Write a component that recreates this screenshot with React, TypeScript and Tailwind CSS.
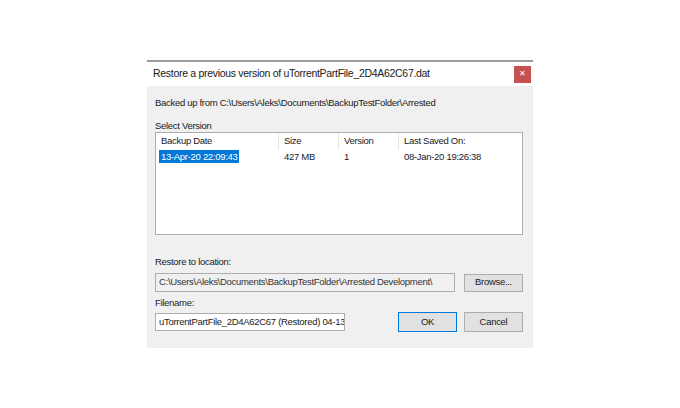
const font = { fontFamily: '"Liberation Sans", Arial, sans-serif' };

const cols = [
  { label: 'Backup Date', w: 'w-[118px]' },
  { label: 'Size', w: 'w-[60px]' },
  { label: 'Version', w: 'w-[60px]' },
  { label: 'Last Saved On:', w: 'flex-1' },
];

export default function App() {
  return (
    <div className="w-[680px] h-[408px] bg-white pt-[60px] pl-[147px] whitespace-nowrap" style={font}>
      <div className="w-[386px] h-[288px] flex flex-col border-t-2 border-[#9c9c9c]">
        {/* title bar */}
        <div className="h-[24px] bg-white flex items-center justify-between pl-[6px] pr-[2px]">
          <span className="text-[10.5px] tracking-[-0.3px] text-[#1a1a1a]">
            Restore a previous version of uTorrentPartFile_2D4A62C67.dat
          </span>
          <button className="w-[17px] h-[17px] bg-[#c75050] flex items-center justify-center text-white text-[8px] leading-none">
            ✕
          </button>
        </div>

        {/* body */}
        <div className="flex-1 bg-[#f0f0f0] pl-[8px] pr-[10px] text-[9.5px] tracking-[-0.3px] text-[#1a1a1a]">
          <div className="mt-[10px] h-[14px] leading-[14px]">
            Backed up from C:\Users\Aleks\Documents\BackupTestFolder\Arrested
          </div>

          <div className="mt-[10px] h-[12px] leading-[12px]">Select Version</div>

          <div className="h-[103px] bg-white border border-[#adadad]">
            <div className="flex h-[17px] pl-[5px]">
              {cols.map((c, i) => (
                <div
                  key={c.label}
                  className={`${c.w} h-full flex items-center ${i < cols.length - 1 ? 'border-r border-[#e5e5e5]' : ''} ${i > 0 ? 'pl-[5px]' : ''}`}
                >
                  {c.label}
                </div>
              ))}
            </div>
            <div className="flex h-[14px] items-center pl-[3px]">
              <div className="w-[120px]">
                <span className="inline-block h-[13px] leading-[13px] bg-[#0078d7] text-white px-[2px]">
                  13-Apr-20 22:09:43
                </span>
              </div>
              <div className="w-[60px] pl-[5px]">427 MB</div>
              <div className="w-[60px] pl-[5px]">1</div>
              <div className="flex-1 pl-[5px]">08-Jan-20 19:26:38</div>
            </div>
          </div>

          <div className="mt-[20px] h-[14px] leading-[14px]">Restore to location:</div>

          <div className="mt-[4px] flex items-center justify-between">
            <div className="w-[300px] h-[19px] border border-[#adadad] bg-[#f0f0f0] flex items-center pl-[3px] text-[#333] overflow-hidden">
              C:\Users\Aleks\Documents\BackupTestFolder\Arrested Development\
            </div>
            <button className="w-[59px] h-[18px] border border-[#adadad] bg-[#e1e1e1] flex items-center justify-center">
              Browse...
            </button>
          </div>

          <div className="mt-[4px] h-[14px] leading-[14px]">Filename:</div>

          <div className="mt-[2px] flex items-center">
            <div className="w-[190px] h-[18px] border border-[#adadad] bg-white flex items-center pl-[3px] overflow-hidden">
              uTorrentPartFile_2D4A62C67 (Restored) 04-13-20
            </div>
            <button className="ml-[53px] w-[59px] h-[20px] border border-[#0078d7] bg-[#e1e1e1] flex items-center justify-center">
              OK
            </button>
            <button className="ml-[7px] w-[59px] h-[20px] border border-[#adadad] bg-[#e1e1e1] flex items-center justify-center">
              Cancel
            </button>
          </div>
        </div>
      </div>
    </div>
  );
}
